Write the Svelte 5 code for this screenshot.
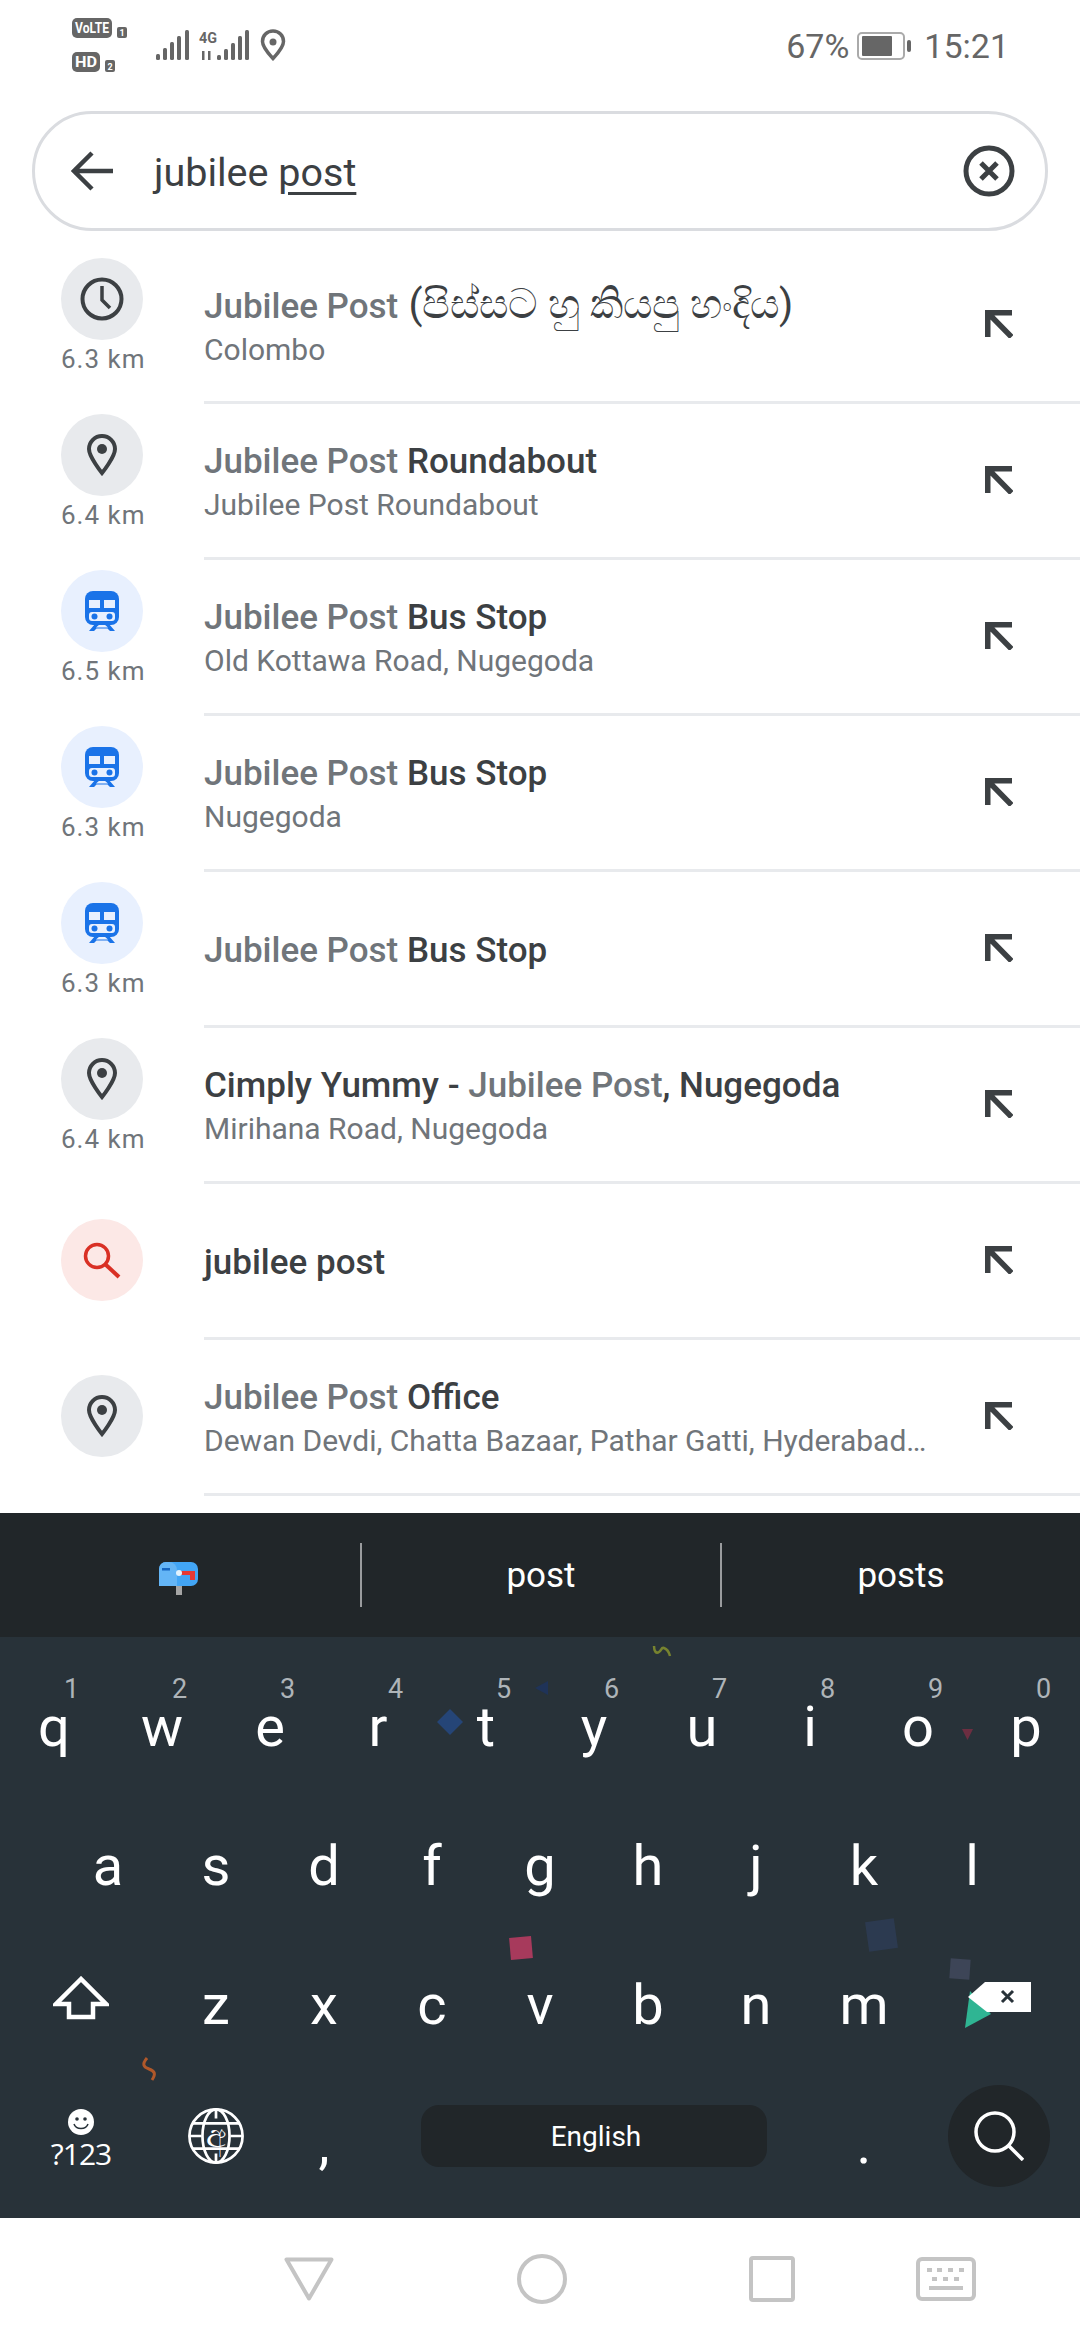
<script>
  const rows = [
    { icon: 'clock', km: '6.3 km', parts: [['Jubilee Post', 'm'], [' (පිස්සට හු කියපු හංදිය)', 'si']], sub: 'Colombo' },
    { icon: 'pin', km: '6.4 km', parts: [['Jubilee Post', 'm'], [' Roundabout', 'd']], sub: 'Jubilee Post Roundabout' },
    { icon: 'train', km: '6.5 km', parts: [['Jubilee Post', 'm'], [' Bus Stop', 'd']], sub: 'Old Kottawa Road, Nugegoda' },
    { icon: 'train', km: '6.3 km', parts: [['Jubilee Post', 'm'], [' Bus Stop', 'd']], sub: 'Nugegoda' },
    { icon: 'train', km: '6.3 km', parts: [['Jubilee Post', 'm'], [' Bus Stop', 'd']], sub: '' },
    { icon: 'pin', km: '6.4 km', parts: [['Cimply Yummy - ', 'd'], ['Jubilee Post', 'm'], [', Nugegoda', 'd']], sub: 'Mirihana Road, Nugegoda' },
    { icon: 'find', km: '', parts: [['jubilee post', 'd']], sub: '' },
    { icon: 'pin', km: '', parts: [['Jubilee Post', 'm'], [' Office', 'd']], sub: 'Dewan Devdi, Chatta Bazaar, Pathar Gatti, Hyderabad…' }
  ];
  const top = [['q','1'],['w','2'],['e','3'],['r','4'],['t','5'],['y','6'],['u','7'],['i','8'],['o','9'],['p','0']];
  const mid = ['a','s','d','f','g','h','j','k','l'];
  const low = ['z','x','c','v','b','n','m'];
</script>

<div class="phone">
  <header class="status">
    <svg class="sig" width="300" height="90" viewBox="0 0 300 90">
      <rect x="72" y="18" width="40" height="20" rx="5" fill="#666"/>
      <text x="75" y="33" font-size="15" font-weight="700" fill="#fff" textLength="34" lengthAdjust="spacingAndGlyphs">VoLTE</text>
      <rect x="117" y="27" width="10" height="11" rx="2" fill="#666"/>
      <text x="119.5" y="36" font-size="9" font-weight="700" fill="#fff">1</text>
      <rect x="72" y="52" width="28" height="20" rx="5" fill="#666"/>
      <text x="75" y="67" font-size="15" font-weight="700" fill="#fff" textLength="22" lengthAdjust="spacingAndGlyphs">HD</text>
      <rect x="105" y="60" width="10" height="12" rx="2" fill="#666"/>
      <text x="107.5" y="70" font-size="9" font-weight="700" fill="#fff">2</text>
      <g fill="#666">
        <rect x="156" y="54" width="4" height="6" rx="1.5"/><rect x="163" y="48" width="4" height="12" rx="1.5"/><rect x="170" y="42" width="4" height="18" rx="1.5"/><rect x="177" y="36" width="4" height="24" rx="1.5"/><rect x="185" y="30" width="4" height="30" rx="1.5"/>
        <text x="199" y="43" font-size="15" font-weight="700" textLength="18" lengthAdjust="spacingAndGlyphs">4G</text>
        <rect x="202" y="51" width="2.5" height="9"/><rect x="208" y="51" width="2.5" height="9"/>
        <rect x="217" y="55" width="4" height="5" rx="1.5"/><rect x="224" y="49" width="4" height="11" rx="1.5"/><rect x="231" y="43" width="4" height="17" rx="1.5"/><rect x="238" y="36" width="4" height="24" rx="1.5"/><rect x="245" y="30" width="4" height="30" rx="1.5"/>
        <circle cx="273" cy="42" r="3.5"/>
      </g>
      <path d="M273 31c-6 0-10.500 4.500-10.500 10.500 0 6 10.500 17 10.500 17s10.500-11 10.500-17C283.500 35.500 279 31 273 31z" fill="none" stroke="#666" stroke-width="3.500"/>
    </svg>
    <div class="right">
      <span class="pct">67%</span>
      <svg width="56" height="30" viewBox="0 0 56 30">
        <rect x="1" y="2" width="46" height="26" rx="4" fill="none" stroke="#aaa" stroke-width="2"/>
        <rect x="5" y="5" width="30" height="20" rx="1" fill="#666"/>
        <rect x="50" y="9" width="4" height="12" rx="2" fill="#666"/>
      </svg>
      <span>15:21</span>
    </div>
  </header>

  <div class="search">
    <svg width="42" height="40" viewBox="0 0 42 40"><path d="M42 20H4M21 2 3 20l18 18" fill="none" stroke="#3c4043" stroke-width="4.500"/></svg>
    <div class="query">jubilee <u>post</u></div>
    <svg width="52" height="52" viewBox="0 0 52 52"><circle cx="26" cy="26" r="23" fill="none" stroke="#3c4043" stroke-width="5"/><path d="M18 18l16 16M34 18 18 34" stroke="#3c4043" stroke-width="5"/></svg>
  </div>

  <ul class="list">
    {#each rows as r}
      <li class="row">
        <div class="lead" class:plain={!r.km}>
          <span class="disc {r.icon}">
            {#if r.icon === 'clock'}
              <svg width="46" height="46" viewBox="0 0 46 46"><circle cx="23" cy="23" r="19.500" fill="none" stroke="#3c4043" stroke-width="4"/><path d="M23 10v14l8 8" fill="none" stroke="#3c4043" stroke-width="3.500"/></svg>
            {:else if r.icon === 'pin'}
              <svg width="30" height="42" viewBox="0 0 30 42"><path d="M15 2C7.800 2 2 7.800 2 15c0 8 13 24 13 24s13-16 13-24C28 7.800 22.200 2 15 2z" fill="none" stroke="#3c4043" stroke-width="4"/><circle cx="15" cy="15" r="5" fill="#3c4043"/></svg>
            {:else if r.icon === 'train'}
              <svg width="34" height="40" viewBox="0 0 34 40">
                <rect width="34" height="34" rx="8" fill="#1a73e8"/>
                <rect x="4" y="9" width="11" height="8" fill="#e8f0fe"/><rect x="19" y="9" width="11" height="8" fill="#e8f0fe"/>
                <rect x="4" y="21" width="26" height="9" rx="3" fill="#e8f0fe"/>
                <circle cx="9.500" cy="25.500" r="3" fill="#1a73e8"/><circle cx="24.500" cy="25.500" r="3" fill="#1a73e8"/>
                <path d="M4 40l6-7h5l-4 3.500h12L19 33h5l6 7h-5l-2.500-2.500h-11L9 40z" fill="#1a73e8"/>
              </svg>
            {:else}
              <svg width="38" height="38" viewBox="0 0 38 38"><circle cx="14" cy="15" r="11.500" fill="none" stroke="#d93025" stroke-width="3.500"/><path d="M22 23l14 13" fill="none" stroke="#d93025" stroke-width="4"/></svg>
            {/if}
          </span>
          {#if r.km}<span class="km">{r.km}</span>{/if}
        </div>
        <div class="body" class:single={!r.sub}>
          <div class="title">{#each r.parts as p}<span class={p[1]}>{p[0]}</span>{/each}</div>
          {#if r.sub}<div class="sub">{r.sub}</div>{/if}
        </div>
        <svg class="nw" width="28" height="28" viewBox="0 0 28 28"><path d="M2.750 27V2.750H27M4 4l22.500 23" fill="none" stroke="#3c4043" stroke-width="5.500"/></svg>
      </li>
    {/each}
  </ul>

  <section class="kb">
    <div class="cands">
      <div class="cand">
        <svg class="box" width="40" height="33" viewBox="0 0 40 33">
          <rect x="17" y="23" width="6" height="10" fill="#a5a5a5"/>
          <rect x="0" y="0" width="39" height="24" rx="7" fill="#42a5f5"/>
          <path d="M7 0h3a8 8 0 0 1 8 8v16H0V7a7 7 0 0 1 7-7z" fill="#64b5f6"/>
          <rect x="3" y="6" width="8" height="2.500" fill="#1565c0"/>
          <path d="M20 9h16v9h-5v-5H20z" fill="#e53935"/>
          <circle cx="20" cy="11" r="3" fill="#e3f2fd"/>
        </svg>
      </div>
      <div class="cand">post</div>
      <div class="cand">posts</div>
    </div>
    <div class="keys">
      <div class="krow">{#each top as k}<span class="key">{k[0]}<i>{k[1]}</i></span>{/each}</div>
      <div class="krow">{#each mid as k}<span class="key">{k}</span>{/each}</div>
      <div class="krow">
        <span class="fn">
          <svg class="shift" width="56" height="44" viewBox="0 0 56 44"><path d="M28 3 3 28h13v13h24V28h13z" fill="none" stroke="#fff" stroke-width="4.500"/></svg>
        </span>
        {#each low as k}<span class="key">{k}</span>{/each}
        <span class="fn">
          <svg width="68" height="48" viewBox="0 0 68 48">
            <path d="M5 9 0 46l26-14z" fill="#2fb593"/>
            <path d="M3 15 20 0h46v30H22z" fill="#fff"/>
            <path d="M37 9l11 11M48 9 37 20" stroke="#283239" stroke-width="3"/>
          </svg>
        </span>
      </div>
      <div class="krow last">
        <span class="fn sym">
          <svg width="26" height="26" viewBox="0 0 26 26"><circle cx="13" cy="13" r="13" fill="#fff"/><circle cx="9" cy="10" r="1.800" fill="#283239"/><circle cx="17" cy="10" r="1.800" fill="#283239"/><path d="M6 15c2 6 12 6 14 0" fill="none" stroke="#283239" stroke-width="1.500"/></svg>
          <b>?123</b>
        </span>
        <span class="fn">
          <svg class="globe" width="58" height="58" viewBox="0 0 60 60" fill="none" stroke="#fff" stroke-width="2.800">
            <circle cx="30" cy="30" r="27.500"/><ellipse cx="30" cy="30" rx="14" ry="27.500"/><path d="M30 3v9M30 48v9M6 17h48M6 43h48M3 30h12M45 30h12"/>
            <text x="30" y="41" text-anchor="middle" font-size="34" fill="#fff" stroke="none">අ</text>
          </svg>
        </span>
        <span class="key">,</span>
        <div class="space">English</div>
        <span class="key">.</span>
        <span class="go">
          <svg width="50" height="50" viewBox="0 0 50 50" fill="none" stroke="#fff" stroke-width="3.500"><circle cx="21" cy="21" r="19"/><path d="M34 34l15 15"/></svg>
        </span>
      </div>
    </div>
    <span class="bit squig1"><svg width="20" height="12" viewBox="0 0 20 12"><path d="M2 1c0 5 2 8 5 6s2-5 5-4 5 4 6 8" fill="none" stroke="#77832f" stroke-width="2.500"/></svg></span>
    <span class="bit diamond"></span>
    <span class="bit tri1"></span>
    <span class="bit tri2"></span>
    <span class="bit sq1"></span>
    <span class="bit sq2"></span>
    <span class="bit sq3"></span>
    <span class="bit squig2"><svg width="16" height="24" viewBox="0 0 16 24"><path d="M6 1C1 7 2 10 8 12c6 2 7 5 3 11" fill="none" stroke="#b0582a" stroke-width="3"/></svg></span>
  </section>

  <nav class="nav">
    <svg width="50" height="44" viewBox="0 0 50 44"><path d="M2.500 2.500h45L25 41.500z" fill="none" stroke="#c4c4c4" stroke-width="4" stroke-linejoin="round"/></svg>
    <svg width="50" height="50" viewBox="0 0 50 50"><circle cx="25" cy="25" r="23" fill="none" stroke="#c4c4c4" stroke-width="4"/></svg>
    <svg width="46" height="46" viewBox="0 0 46 46"><rect x="2" y="2" width="42" height="42" rx="2" fill="none" stroke="#c4c4c4" stroke-width="4"/></svg>
    <svg width="60" height="44" viewBox="0 0 60 44">
      <rect x="2" y="2" width="56" height="40" rx="4" fill="none" stroke="#c4c4c4" stroke-width="4"/>
      <path d="M11 11h5v4h-5zM21 11h5v4h-5zM32 11h5v4h-5zM43 11h5v4h-5zM16 20h5v4h-5zM27 20h5v4h-5zM38 20h5v4h-5zM13 29h34v4H13z" fill="#c4c4c4"/>
    </svg>
  </nav>
</div>

<style>
  :global(body) { margin: 0; background: #fff; }
  .phone { width: 1080px; height: 2340px; display: flex; flex-direction: column; overflow: hidden; font-family: Roboto, "Noto Sans", sans-serif; background: #fff; }

  .status { height: 111px; display: flex; justify-content: space-between; flex-shrink: 0; }
  .sig { display: block; font-family: "Roboto", sans-serif; }
  .right { display: flex; align-items: center; height: 92px; gap: 11px; padding-right: 71px; font-size: 34px; color: #666; }
  .right svg { display: block; }
  .pct { margin-right: -3px; }

  .search { box-sizing: border-box; height: 120px; margin: 0 32px; border: 3px solid #dadce0; border-radius: 60px; display: flex; align-items: center; padding: 0 30px 0 36px; flex-shrink: 0; }
  .query { flex: 1; margin-left: 41px; padding-top: 2px; font-size: 39.5px; color: #3c4043; }
  .query u { text-underline-offset: 6px; text-decoration-thickness: 3px; }

  .list { list-style: none; margin: 17px 0 0; padding: 0; flex-shrink: 0; }
  .row { height: 156px; display: flex; position: relative; }
  .lead { width: 204px; flex-shrink: 0; height: 153px; padding-left: 61px; box-sizing: border-box; display: flex; flex-direction: column; align-items: flex-start; padding-top: 10px; }
  .lead.plain { padding-top: 35px; }
  .disc { width: 82px; height: 82px; border-radius: 50%; display: flex; align-items: center; justify-content: center; background: #e8eaed; }
  .disc.train { background: #e8f0fe; }
  .disc.find { background: #fce8e6; }
  .km { width: 82px; text-align: center; white-space: nowrap; font-size: 26px; line-height: 38px; color: #70757a; letter-spacing: 1px; }
  .body { flex: 1; min-width: 0; box-sizing: border-box; height: 156px; border-bottom: 3px solid #e8eaed; display: flex; flex-direction: column; justify-content: center; padding-top: 6px; }
  .body.single { padding-top: 5px; }
  .title { font-size: 35px; line-height: 42px; font-weight: 500; white-space: nowrap; }
  .title .m { color: #70757a; }
  .title .d { color: #3c4043; }
  .title .si { color: #3c4043; font-size: 41px; font-weight: 400; line-height: 1; }
  .sub { font-size: 30px; line-height: 42px; margin-top: 1px; color: #70757a; white-space: nowrap; }
  .nw { position: absolute; left: 985px; top: 62px; }

  .kb { margin-top: 17px; height: 705px; position: relative; background: #283239; flex-shrink: 0; overflow: hidden; }
  .cands { height: 124px; background: #212629; display: grid; grid-template-columns: 360px 360px 360px; align-items: center; }
  .cand { height: 64px; display: flex; align-items: center; justify-content: center; font-size: 35px; color: #fff; border-left: 2px solid #9a9c9e; box-sizing: border-box; }
  .cand:first-child { border-left: 0; }
  .box { margin: 7px 3px 0 0; }
  .keys { padding-top: 21px; }
  .krow { height: 139px; display: flex; justify-content: center; }
  .key { position: relative; width: 108px; flex-shrink: 0; text-align: center; font-size: 56px; line-height: 139px; color: #fff; }
  .key i { position: absolute; left: 64px; top: 15px; font-style: normal; font-size: 27px; line-height: 32px; color: #aeb4b8; }
  .fn { width: 162px; flex-shrink: 0; display: flex; align-items: center; justify-content: center; }
  .shift { margin-bottom: 16px; }
  .last { justify-content: flex-start; }
  .last .fn { width: 108px; margin-top: -9px; }
  .last .fn:first-child { width: 162px; }
  .globe { margin-bottom: 8px; }
  .sym { flex-direction: column; }
  .sym b { font: 400 30px/34px "Open Sans", sans-serif; color: #fff; letter-spacing: -1px; margin-top: 2px; }
  .space { width: 346px; height: 62px; margin: 30px 43px 0 43px; padding-left: 4px; box-sizing: border-box; background: #212629; border-radius: 18px; color: #fff; font-size: 28px; display: flex; align-items: center; justify-content: center; flex-shrink: 0; }
  .go { width: 102px; height: 102px; border-radius: 50%; background: #212629; display: flex; align-items: center; justify-content: center; margin: 10px 0 0 30px; flex-shrink: 0; }

  .bit { position: absolute; display: block; }
  .squig1 { left: 652px; top: 129px; }
  .squig2 { left: 141px; top: 544px; }
  .diamond { left: 437px; top: 196px; width: 26px; height: 26px; background: #254577; clip-path: polygon(50% 0, 100% 50%, 50% 100%, 0 50%); }
  .tri1 { left: 535px; top: 168px; width: 13px; height: 14px; background: #1f3358; clip-path: polygon(100% 0, 100% 100%, 0 50%); }
  .tri2 { left: 962px; top: 216px; width: 11px; height: 11px; background: #6d2e41; clip-path: polygon(0 0, 100% 0, 50% 100%); }
  .sq1 { left: 510px; top: 424px; width: 22px; height: 22px; background: #a73a5c; transform: rotate(-5deg); }
  .sq2 { left: 867px; top: 407px; width: 29px; height: 30px; background: #2c3a50; transform: rotate(-8deg); }
  .sq3 { left: 950px; top: 446px; width: 20px; height: 20px; background: #3d4557; transform: rotate(4deg); }

  .nav { flex: 1; display: flex; align-items: center; padding-left: 284px; }
  .nav svg:nth-child(1) { margin-right: 183px; }
  .nav svg:nth-child(2) { margin-right: 182px; }
  .nav svg:nth-child(3) { margin-right: 121px; }
</style>
